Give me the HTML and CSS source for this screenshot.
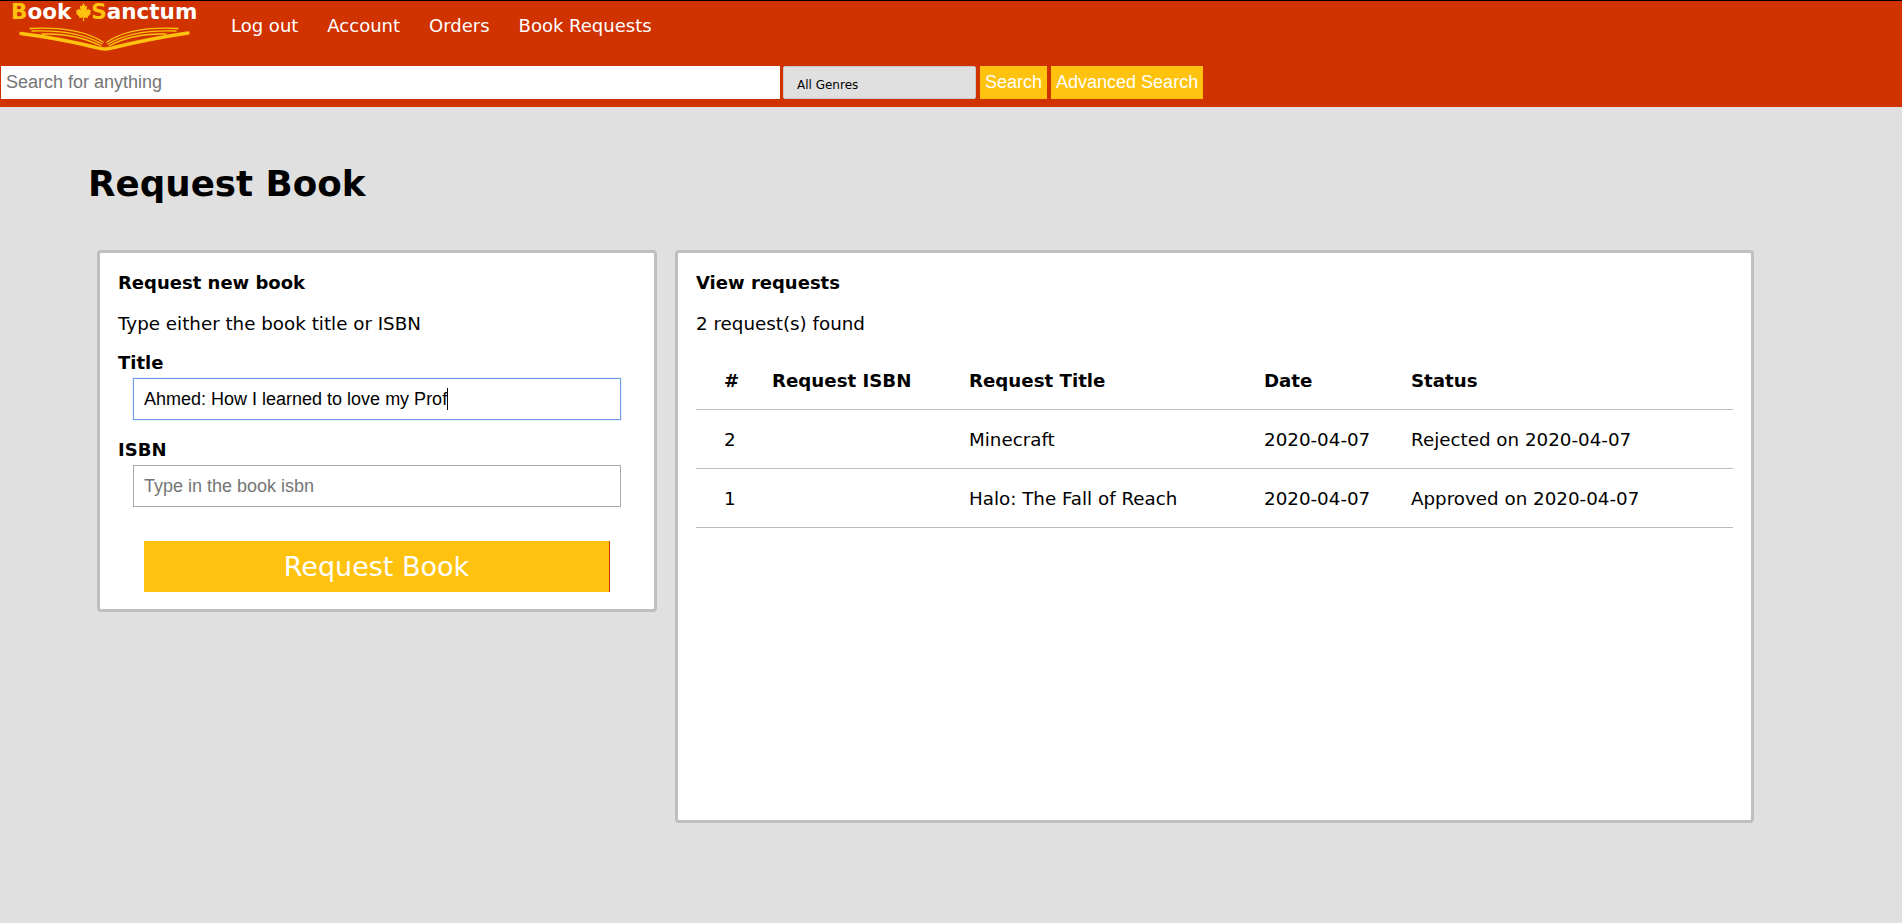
FILE: index.html
```html
<!DOCTYPE html>
<html lang="en">
<head>
<meta charset="utf-8">
<title>Request Book</title>
<link rel="stylesheet" href="styles.css">
</head>
<body>
<header class="header">
  <div class="topbar">
    <a class="logo" href="#">
      <span class="logo-text"><span class="gold">B</span>ook<svg class="leaf" viewBox="0 0 20 24" aria-hidden="true"><path fill="#ffc20e" d="M10 0 L12.6 4.6 L14.8 3.4 L14 10 L16.6 7.4 L17.4 9.6 L20 9.2 L19 13 L20 14 L15.6 18 L16 20 L10.6 19.4 L10.8 24 L9.2 24 L9.4 19.4 L4 20 L4.4 18 L0 14 L1 13 L0 9.2 L2.6 9.6 L3.4 7.4 L6 10 L5.2 3.4 L7.4 4.6 Z"/></svg><span class="gold">S</span>anctum</span>
      <svg class="book" viewBox="0 0 176 28" aria-hidden="true">
        <g fill="none" stroke="#ffc20e" stroke-linecap="round">
          <path stroke-width="3.4" d="M3 9.5 Q45 15 78 23.5 Q87 26.5 96 23.5 Q130 15 170 9"/>
          <path stroke-width="1.4" d="M12 4.5 Q60 2 85 18"/>
          <path stroke-width="1.4" d="M14 7 Q58 5.5 84 20"/>
          <path stroke-width="1.4" d="M24 10 Q58 9 83 22"/>
          <path stroke-width="1.4" d="M160 4.5 Q112 2 89 18"/>
          <path stroke-width="1.4" d="M158 7 Q114 5.5 90 20"/>
          <path stroke-width="1.4" d="M148 10 Q114 9 91 22"/>
        </g>
      </svg>
    </a>
    <nav class="nav">
      <a href="#">Log out</a>
      <a href="#">Account</a>
      <a href="#">Orders</a>
      <a href="#">Book Requests</a>
    </nav>
  </div>
  <form class="searchbar">
    <input class="search-input" type="text" placeholder="Search for anything">
    <div class="genre">All Genres</div>
    <button class="search-btn" type="button">Search</button>
    <button class="search-btn" type="button">Advanced Search</button>
  </form>
</header>
<main class="main">
  <h1 class="page-title">Request Book</h1>
  <div class="panels">
    <section class="panel panel-form">
      <h2 class="panel-title">Request new book</h2>
      <p class="panel-text">Type either the book title or ISBN</p>
      <label class="field-label">Title</label>
      <div class="fake-input focused"><span>Ahmed: How I learned to love my Prof</span><i class="caret"></i></div>
      <label class="field-label isbn-label">ISBN</label>
      <input class="text-input" type="text" placeholder="Type in the book isbn">
      <button class="submit" type="button">Request Book</button>
    </section>
    <section class="panel panel-list">
      <h2 class="panel-title">View requests</h2>
      <p class="panel-text">2 request(s) found</p>
      <table class="table">
        <thead>
          <tr><th class="c-num">#</th><th class="c-isbn">Request ISBN</th><th class="c-title">Request Title</th><th class="c-date">Date</th><th>Status</th></tr>
        </thead>
        <tbody>
          <tr><td class="c-num">2</td><td></td><td>Minecraft</td><td>2020-04-07</td><td>Rejected on 2020-04-07</td></tr>
          <tr><td class="c-num">1</td><td></td><td>Halo: The Fall of Reach</td><td>2020-04-07</td><td>Approved on 2020-04-07</td></tr>
        </tbody>
      </table>
    </section>
  </div>
</main>
</body>
</html>
```
FILE: styles.css
```css
* { box-sizing: border-box; }
html, body { margin: 0; height: 100%; }
body {
  background: #e0e0e0;
  color: #000;
  font-family: "DejaVu Sans", Verdana, sans-serif;
  font-size: 18.3px;
  overflow: hidden;
}
.header {
  background: #d03200;
  border-top: 1px solid #000;
  height: 107px;
}
.topbar { display: flex; height: 65px; }
.logo {
  display: block;
  width: 231px;
  padding-left: 11px;
  text-decoration: none;
}
.logo-text {
  display: flex;
  align-items: center;
  height: 21px;
  color: #fff;
  font-weight: bold;
  font-size: 21.5px;
  line-height: 21px;
  white-space: nowrap;
}
.gold { color: #ffc20e; }
.leaf { width: 15px; height: 18px; margin: 0 0 0 5px; }
.book { display: block; width: 176px; height: 28px; margin-top: 2px; margin-left: 7px; }
.nav { display: flex; gap: 29px; padding-top: 14px; }
.nav a { color: #fff; text-decoration: none; font-size: 18px; line-height: 22px; }
.searchbar { display: flex; align-items: stretch; height: 33px; padding-left: 1px; }
.search-input {
  width: 779px;
  border: 0;
  padding: 0 5px;
  background: #fff;
  font: 18px "Liberation Sans", Arial, sans-serif;
  outline: 0;
}
.search-input::placeholder { color: #757575; opacity: 1; }
.genre {
  width: 193px;
  margin-left: 3px;
  padding: 11px 0 0 13px;
  background: #e0e0e0;
  border: 1px solid #c8c8c8;
  border-radius: 2px;
  font-size: 12px;
  line-height: 15px;
}
.search-btn {
  margin-left: 4px;
  padding: 0 5px;
  border: 0;
  background: #ffc20e;
  color: #fff;
  font: 18px "Liberation Sans", Arial, sans-serif;
}
.main { padding: 55px 0 0 88px; }
.page-title { margin: 0; font-size: 35.7px; line-height: 44px; }
.panels { display: flex; gap: 18px; margin: 44px 0 0 9px; align-items: flex-start; }
.panel {
  background: #fff;
  border: 3px solid #bfbfbf;
  border-radius: 4px;
  padding: 20px 18px 0;
}
.panel-form { width: 560px; height: 362px; }
.panel-list { width: 1079px; height: 573px; }
.panel-title { margin: 0; font-size: 18px; line-height: 20px; }
.panel-text { margin: 21px 0 0; line-height: 20px; }
.field-label { display: block; margin-top: 19px; font-size: 18px; font-weight: bold; line-height: 20px; }
.isbn-label { margin-top: 20px; }
.fake-input, .text-input {
  display: block;
  width: 488px;
  height: 42px;
  margin: 5px 0 0 15px;
  padding: 0 10px;
  background: #fff;
  border: 1px solid #a9a9a9;
  font: 18px "Liberation Sans", Arial, sans-serif;
  outline: 0;
}
.fake-input { display: flex; align-items: center; border-color: #6f9ee8; box-shadow: 0 0 1px #6f9ee8; }
.text-input::placeholder { color: #757575; opacity: 1; }
.caret { display: block; width: 1px; height: 22px; background: #000; }
.submit {
  display: block;
  width: 466px;
  height: 51px;
  margin: 34px 0 0 26px;
  border: 0;
  border-right: 1px solid #d03200;
  background: #ffc20e;
  color: #fff;
  font: 27px "DejaVu Sans", Verdana, sans-serif;
}
.table { width: 100%; margin-top: 16px; border-collapse: collapse; table-layout: fixed; }
.table th, .table td { height: 59px; padding: 2px 0 0; text-align: left; border-bottom: 1px solid #bbb; font-size: 18.3px; }
.table th { font-size: 18.2px; }
.c-num { width: 76px; padding-left: 28px !important; }
.c-isbn { width: 197px; }
.c-title { width: 295px; }
.c-date { width: 147px; }
```
